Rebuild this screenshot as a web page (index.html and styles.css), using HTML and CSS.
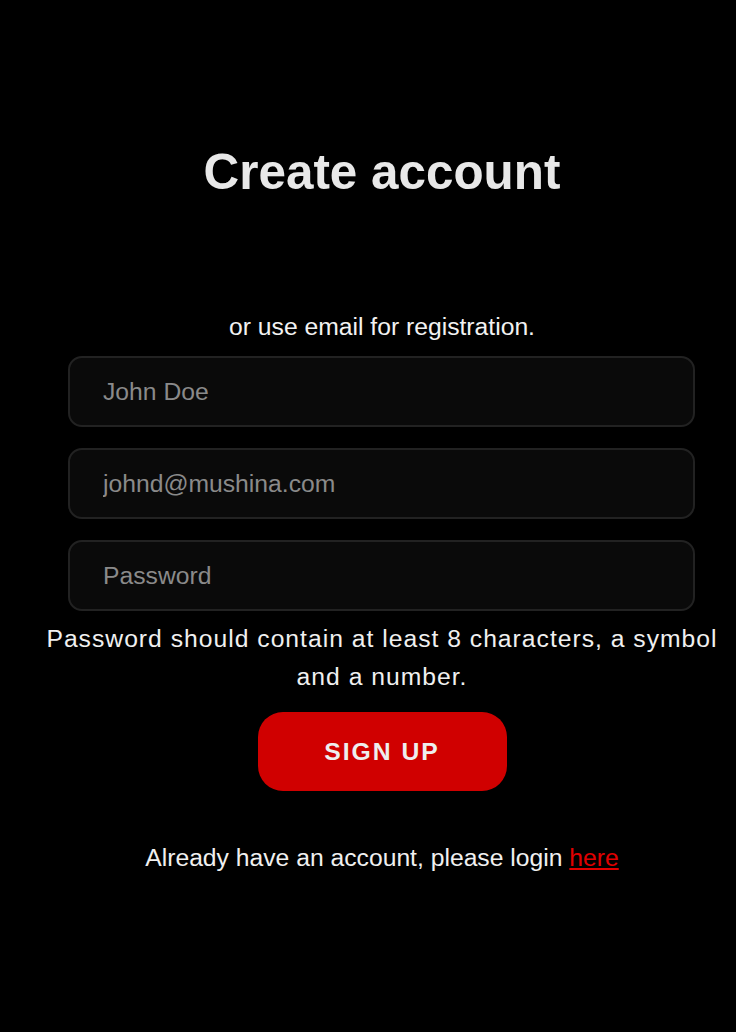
FILE: index.html
```html
<!DOCTYPE html>
<html>
<head>
<meta charset="utf-8">
<link rel="stylesheet" href="styles.css">
</head>
<body>
<main class="page">
  <h1 class="title">Create account</h1>
  <p class="sub">or use email for registration.</p>
  <form class="form">
    <input class="field" type="text" placeholder="John Doe">
    <input class="field" type="email" placeholder="johnd@mushina.com">
    <input class="field" type="password" placeholder="Password">
  </form>
  <p class="hint">Password should contain at least 8 characters, a symbol and a number.</p>
  <button class="btn" type="button">SIGN UP</button>
  <p class="login">Already have an account, please login <a href="#" class="link">here</a></p>
</main>
</body>
</html>
```
FILE: styles.css
```css
html, body {
  margin: 0;
  padding: 0;
  background: #000;
}
body {
  font-family: "Liberation Sans", Arial, sans-serif;
  color: #eee;
}
.page {
  display: flex;
  flex-direction: column;
  align-items: center;
  padding: 0 0 0 28px;
}
.title {
  margin: 144px 0 0;
  font-size: 49.4px;
  font-weight: bold;
  line-height: 56px;
  color: #e8e8e8;
}
.sub {
  margin: 113px 0 0;
  font-size: 24.7px;
  line-height: 28px;
  color: #f2f2f2;
}
.form {
  display: flex;
  flex-direction: column;
  gap: 21px;
  align-self: stretch;
  margin: 15px 41px 0 40px;
}
.field {
  height: 71px;
  box-sizing: border-box;
  border: 2px solid #222;
  border-radius: 14px;
  background: #0a0a0a;
  padding: 0 33px;
  font-family: "Liberation Sans", Arial, sans-serif;
  font-size: 24.7px;
  color: #ccc;
  outline: none;
}
.field::placeholder {
  color: #8a8a8a;
}
.hint {
  margin: 9px 0 0;
  font-size: 24.7px;
  line-height: 38px;
  letter-spacing: 1px;
  text-align: center;
  color: #f0f0f0;
}
.btn {
  margin-top: 16px;
  width: 249px;
  height: 79px;
  border: none;
  border-radius: 25px;
  background: #d00000;
  color: #eee;
  font-family: "Liberation Sans", Arial, sans-serif;
  font-size: 24.7px;
  font-weight: bold;
  letter-spacing: 2px;
  cursor: pointer;
}
.login {
  margin: 53px 0 0;
  font-size: 24.7px;
  line-height: 28px;
  color: #f0f0f0;
}
.link {
  color: #e00000;
  text-decoration: underline;
}
```
